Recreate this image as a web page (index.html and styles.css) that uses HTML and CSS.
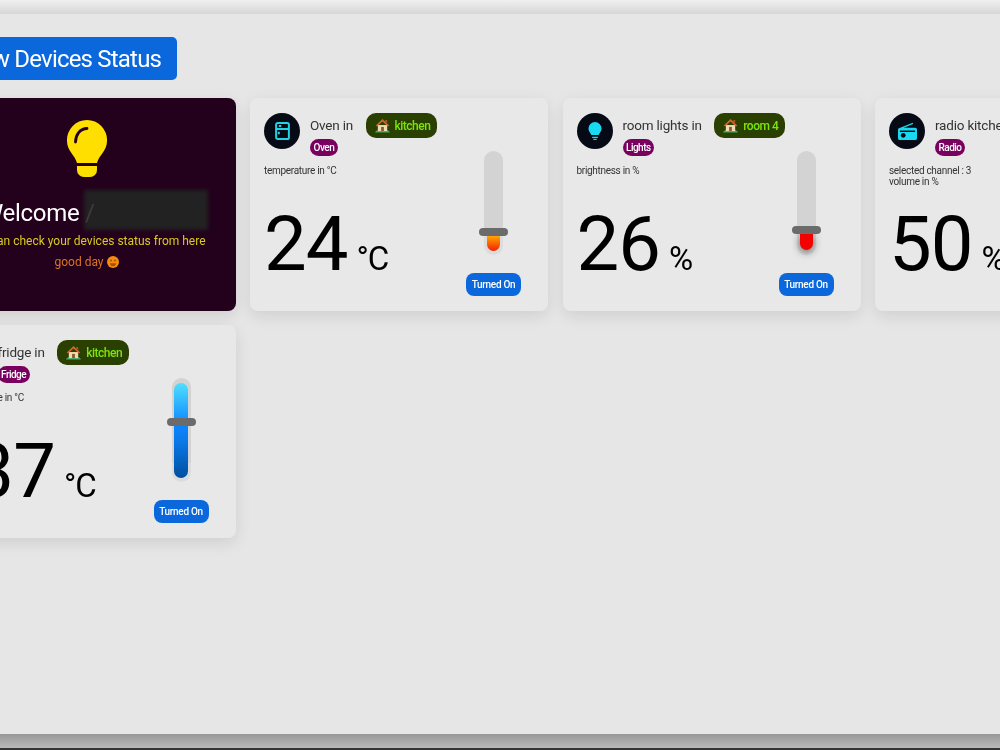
FILE: index.html
```html
<!DOCTYPE html>
<html lang="en">
<head>
<meta charset="utf-8">
<title>View Devices Status</title>
<link rel="stylesheet" href="styles.css">
</head>
<body>
<svg class="defs" width="0" height="0" aria-hidden="true">
  <symbol id="house" viewBox="0 0 16 16">
    <path d="M0 15.500c1-2.500 3-3 8-3s7 .5 8 3z" fill="#3fae6a"/>
    <path d="M3 7.500h10V14H3z" fill="#efd9b0"/>
    <path d="M8 1 .8 8l1.400 1L8 3.600 13.800 9l1.400-1z" fill="#d9622b"/>
    <path d="M6.500 9.500h3V14h-3z" fill="#8a5a33"/>
    <path d="M11 2h2v3.500l-2-2z" fill="#b5502a"/>
  </symbol>
</svg>
<div class="band-top"></div>
<main class="main">
  <h1 class="heading">View Devices Status</h1>
  <section class="grid">
    <article class="card welcome">
      <svg class="bulb" viewBox="0 0 40 58" width="40" height="58" aria-hidden="true">
        <path d="M20 0A20 20 0 0 1 40 21C40 31 32 35 30 43H10C8 35 0 31 0 21A20 20 0 0 1 20 0Z" fill="#ffdf00"/>
        <path d="M10 46H30V50a7 7 0 0 1-7 7h-6a7 7 0 0 1-7-7Z" fill="#ffdf00"/>
        <path d="M8.500 22C8.500 15 13 8.500 20 8.500" fill="none" stroke="#23001c" stroke-width="2.800" stroke-linecap="round"/>
      </svg>
      <h2 class="welcome-title">Welcome <span class="masked"><span class="mask"></span><span class="slash">/</span></span></h2>
      <p class="welcome-line">You can check your devices status from here</p>
      <p class="welcome-day">good day
        <svg class="smile" viewBox="0 0 12 12" width="12" height="12" aria-hidden="true">
          <circle cx="6" cy="6" r="6" fill="#f58a12"/>
          <circle cx="4" cy="4.600" r="1" fill="#a85000"/>
          <circle cx="8" cy="4.600" r="1" fill="#a85000"/>
          <path d="M3 7.200a3 3 0 0 0 6 0z" fill="#a85000"/>
        </svg>
      </p>
    </article>

    <article class="card">
      <div class="info">
        <header class="head">
          <span class="avatar">
            <svg viewBox="0 0 18 22" width="15" height="18" aria-hidden="true" fill="none" stroke="#22d3e6" stroke-width="2.400">
              <rect x="1.200" y="1.200" width="15.600" height="19.600" rx="2"/>
              <path d="M1 8.500h16M4.500 5h3M4.500 12v3"/>
            </svg>
          </span>
          <div>
            <div class="title-row"><span class="title">Oven in</span><span class="pill"><svg class="house"><use href="#house"/></svg>kitchen</span></div>
            <span class="badge">Oven</span>
          </div>
        </header>
        <p class="note">temperature in °C</p>
        <div class="value">24<span class="unit">°C</span></div>
      </div>
      <aside class="control">
        <div class="track">
          <div class="fill fill-heat"></div>
          <div class="handle handle-oven"></div>
        </div>
        <button class="state">Turned On</button>
      </aside>
    </article>

    <article class="card">
      <div class="info">
        <header class="head">
          <span class="avatar">
            <svg viewBox="0 0 16 22" width="14" height="18" aria-hidden="true" fill="#19d8f2">
              <path d="M8 0a8 8 0 0 1 8 8c0 3.500-2.500 5-3.500 8h-9C2.500 13 0 11.500 0 8a8 8 0 0 1 8-8Z"/>
              <path d="M4.500 18h7v1.500h-7zM6 20.500h4V22H6z"/>
            </svg>
          </span>
          <div>
            <div class="title-row"><span class="title">room lights in</span><span class="pill"><svg class="house"><use href="#house"/></svg>room 4</span></div>
            <span class="badge">Lights</span>
          </div>
        </header>
        <p class="note">brightness in %</p>
        <div class="value">26<span class="unit">%</span></div>
      </div>
      <aside class="control">
        <div class="track">
          <div class="fill fill-light"></div>
          <div class="handle handle-light"></div>
        </div>
        <button class="state">Turned On</button>
      </aside>
    </article>

    <article class="card">
      <div class="info">
        <header class="head">
          <span class="avatar">
            <svg viewBox="0 0 20 20" width="19" height="19" aria-hidden="true" fill="#19d8f2">
              <path d="M1 6.500 15.500.8l.5 1.400L6 6h12a2 2 0 0 1 2 2v9a2 2 0 0 1-2 2H2a2 2 0 0 1-2-2V8a2 2 0 0 1 1-1.500Z"/>
              <circle cx="5.500" cy="14" r="2.500" fill="#050a14"/>
              <path d="M2 9h16v1.500H2z" fill="#050a14"/>
            </svg>
          </span>
          <div>
            <div class="title-row"><span class="title">radio kitchen in</span><span class="pill"><svg class="house"><use href="#house"/></svg>kitchen</span></div>
            <span class="badge">Radio</span>
          </div>
        </header>
        <p class="note">selected channel : 3<br>volume in %</p>
        <div class="value">50<span class="unit">%</span></div>
      </div>
      <aside class="control">
        <div class="track">
          <div class="fill fill-light"></div>
          <div class="handle handle-light"></div>
        </div>
        <button class="state">Turned On</button>
      </aside>
    </article>

    <article class="card">
      <div class="info">
        <header class="head">
          <span class="avatar"></span>
          <div>
            <div class="title-row"><span class="title">fridge in</span><span class="pill"><svg class="house"><use href="#house"/></svg>kitchen</span></div>
            <span class="badge">Fridge</span>
          </div>
        </header>
        <p class="note">temperature in °C</p>
        <div class="value">-37<span class="unit">°C</span></div>
      </div>
      <aside class="control">
        <div class="track">
          <div class="fill fill-cold"></div>
          <div class="handle handle-fridge"></div>
        </div>
        <button class="state">Turned On</button>
      </aside>
    </article>
  </section>
</main>
<div class="band-bottom"></div>
<div class="band-edge"></div>
</body>
</html>
```
FILE: styles.css
```css
* { box-sizing: border-box; }
html, body { margin: 0; height: 750px; overflow: hidden; }
body {
  display: flex;
  flex-direction: column;
  background: #e6e6e6;
  color: #333;
  font-family: Roboto, "Liberation Sans", sans-serif;
  filter: blur(0.35px);
}
.defs { position: absolute; }
.band-top { height: 14px; flex: none; background: linear-gradient(#f0f0f0, #d6d6d6); }
.band-bottom { height: 14px; flex: none; background: linear-gradient(#979797, #b9b9b9); }
.band-edge { height: 2px; flex: none; background: #333; }
.main { flex: 1; margin-left: -62.500px; padding-top: 23px; min-height: 0; }
.heading {
  display: inline-block;
  margin: 0 0 18px 7px;
  height: 43px;
  padding: 0 16px;
  border-radius: 5px;
  background: #0a68dc;
  color: #fff;
  font-size: 24px;
  font-weight: 400;
  letter-spacing: -0.8px;
  line-height: 45px;
}
.grid {
  display: grid;
  grid-template-columns: repeat(4, 298px);
  grid-auto-rows: 213px;
  column-gap: 14.500px;
  row-gap: 14px;
}
.card {
  display: flex;
  padding: 15px 27px 15px 14px;
  border-radius: 8px;
  background: #e8e8e8;
  box-shadow: 0 5px 16px rgba(0, 0, 0, 0.1);
}
.info { flex: 1; min-width: 0; display: flex; flex-direction: column; }
.head { display: flex; gap: 10px; }
.avatar {
  flex: none;
  display: flex;
  align-items: center;
  justify-content: center;
  width: 36px;
  height: 36px;
  border-radius: 50%;
  background: #050a14;
}
.title-row { display: flex; align-items: center; gap: 12.500px; height: 25px; white-space: nowrap; }
.title { padding-bottom: 2px; font-size: 13.500px; letter-spacing: -0.2px; color: #333; }
.pill {
  display: flex;
  align-items: center;
  gap: 5px;
  height: 25px;
  padding: 0 7px 0 9px;
  border-radius: 10px;
  background: #2a4000;
  color: #7de40a;
  font-size: 12px;
  font-weight: 500;
  letter-spacing: -0.5px;
}
.house { width: 15px; height: 15px; }
.badge {
  display: inline-block;
  height: 17px;
  margin-top: 1px;
  padding: 0 3.500px;
  border-radius: 9px;
  background: #7a0060;
  color: #fff;
  font-size: 10px;
  font-weight: 500;
  letter-spacing: -0.5px;
  line-height: 17px;
  vertical-align: top;
}
.note { margin: 8px 0 0; font-size: 10px; letter-spacing: -0.3px; line-height: 11px; color: #333; }
.value {
  margin-top: auto;
  margin-bottom: 12px;
  color: #000;
  font-size: 76px;
  font-weight: 400;
  letter-spacing: -1px;
  line-height: 80px;
  white-space: nowrap;
}
.unit { margin-left: 9px; font-size: 33px; font-weight: 400; letter-spacing: -1px; line-height: 1; }
.control { flex: none; width: 55px; display: flex; flex-direction: column; align-items: center; padding-top: 38px; }
.track { position: relative; width: 19px; height: 104px; border-radius: 10px; background: linear-gradient(#d3d3d3 82%, #dcdcdc 82%); }
.fill { position: absolute; left: 3px; width: 13px; border-radius: 0 0 7px 7px; }
.fill-heat { top: 85px; height: 15px; background: linear-gradient(#ffa500, #f52000); }
.fill-light { top: 83px; height: 16px; background: #f50000; box-shadow: 0 2px 9px rgba(0, 0, 0, 0.6); }
.fill-cold { top: 5px; left: 2.500px; width: 14px; height: 95px; border-radius: 7px; background: linear-gradient(#4fdfff, #0a85ff 45%, #0a78e8 62%, #004f9e); }
.handle { position: absolute; left: -5px; width: 29px; height: 8px; border-radius: 4px; background: #6b6b6b; }
.handle-oven { top: 77px; }
.handle-light { top: 75px; }
.handle-fridge { top: 40px; }
.state {
  width: 55px;
  height: 23px;
  margin-top: 18px;
  padding: 0;
  border: 0;
  border-radius: 8px;
  background: #0a68dc;
  color: #fff;
  font-family: inherit;
  font-size: 10px;
  font-weight: 500;
  letter-spacing: -0.3px;
}
.welcome {
  display: block;
  padding: 22px 0 0;
  background: #23001c;
  text-align: center;
}
.bulb { display: block; margin: 0 auto; }
.welcome-title { margin: 20px 0 0; color: #fff; font-size: 24px; font-weight: 400; letter-spacing: -0.3px; line-height: 30px; white-space: nowrap; }
.masked { position: relative; display: inline-block; width: 106px; text-align: left; }
.slash { position: relative; color: #3c3c3c; }
.mask {
  position: absolute;
  left: -1px;
  top: -8px;
  width: 124px;
  height: 40px;
  background: #222;
  filter: blur(2px);
}
.welcome-line { margin: 5px 0 0; color: #d8cb1e; font-size: 12px; line-height: 16px; white-space: nowrap; }
.welcome-day { margin: 5px 0 0; color: #dc7420; font-size: 12px; line-height: 16px; }
.smile { vertical-align: -2px; }
```
